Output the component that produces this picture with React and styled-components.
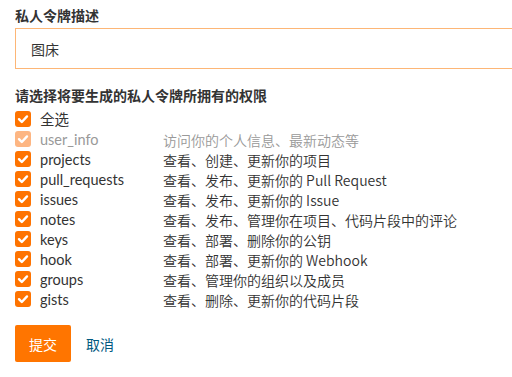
import React from 'react';
import styled, { createGlobalStyle } from 'styled-components';

const GlobalStyle = createGlobalStyle`
  html, body {
    margin: 0;
    padding: 0;
    background: #fff;
    overflow: hidden;
  }
  body {
    font-family: "Lato", "Noto Sans CJK SC", sans-serif;
    color: #333;
  }
`;

const Form = styled.form`
  padding: 5px 0 0 15px;
  font-size: 14px;
`;

const FieldLabel = styled.div`
  font-family: "Noto Sans CJK SC", sans-serif;
  font-weight: 700;
  font-size: 14px;
  line-height: 20px;
  color: #333;
`;

const TextInput = styled.input`
  display: block;
  box-sizing: border-box;
  width: calc(100% + 20px);
  height: 41px;
  margin: 3px 0 16px;
  padding: 0 15px;
  border: 1px solid #fdb676;
  border-radius: 0;
  outline: none;
  font-family: "Noto Sans CJK SC", sans-serif;
  font-size: 14px;
  color: #333;
`;

const ScopeList = styled.div`
  margin-top: 5px;
  display: flex;
  flex-direction: column;
`;

const ScopeRow = styled.label`
  display: grid;
  grid-template-columns: 25px 123px 1fr;
  align-items: center;
  height: 20px;
  line-height: 20px;
  color: ${(p) => (p.$disabled ? '#999' : '#333')};
`;

const Box = styled.span`
  width: 16px;
  height: 16px;
  border-radius: 3px;
  background: ${(p) => (p.$disabled ? '#fdb683' : '#fe7300')};
  display: flex;
  align-items: center;
  justify-content: center;
  margin-top: -3px;
`;

const Name = styled.span`
  font-family: "Lato", "Noto Sans CJK SC", sans-serif;
  font-size: 14.5px;
`;

const Desc = styled.span`
  font-family: "Noto Sans CJK SC", sans-serif;
  font-weight: 350;
  white-space: nowrap;
`;

const Actions = styled.div`
  display: flex;
  align-items: center;
  gap: 15px;
  margin-top: 15px;
`;

const SubmitButton = styled.button`
  width: 56px;
  height: 37px;
  border: none;
  border-radius: 2px;
  background: #ff7500;
  color: #fff;
  font-family: "Noto Sans CJK SC", sans-serif;
  font-size: 14px;
  cursor: pointer;
`;

const CancelLink = styled.a`
  color: #005980;
  font-family: "Noto Sans CJK SC", sans-serif;
  text-decoration: none;
`;

const Check = () => (
  <svg width="12" height="12" viewBox="0 0 12 12">
    <path d="M2 6.2 L4.8 9 L10 3.4" fill="none" stroke="#fff" strokeWidth="2.4" strokeLinecap="round" strokeLinejoin="round" />
  </svg>
);

const scopes = [
  { name: '全选', desc: '' },
  { name: 'user_info', desc: '访问你的个人信息、最新动态等', disabled: true },
  { name: 'projects', desc: '查看、创建、更新你的项目' },
  { name: 'pull_requests', desc: '查看、发布、更新你的 Pull Request' },
  { name: 'issues', desc: '查看、发布、更新你的 Issue' },
  { name: 'notes', desc: '查看、发布、管理你在项目、代码片段中的评论' },
  { name: 'keys', desc: '查看、部署、删除你的公钥' },
  { name: 'hook', desc: '查看、部署、更新你的 Webhook' },
  { name: 'groups', desc: '查看、管理你的组织以及成员' },
  { name: 'gists', desc: '查看、删除、更新你的代码片段' },
];

const App = () => (
  <>
    <GlobalStyle />
    <Form onSubmit={(e) => e.preventDefault()}>
      <FieldLabel>私人令牌描述</FieldLabel>
      <TextInput defaultValue="图床" />
      <FieldLabel>请选择将要生成的私人令牌所拥有的权限</FieldLabel>
      <ScopeList>
        {scopes.map((s) => (
          <ScopeRow key={s.name} $disabled={s.disabled}>
            <Box $disabled={s.disabled}><Check /></Box>
            <Name>{s.name}</Name>
            <Desc>{s.desc}</Desc>
          </ScopeRow>
        ))}
      </ScopeList>
      <Actions>
        <SubmitButton type="submit">提交</SubmitButton>
        <CancelLink href="#">取消</CancelLink>
      </Actions>
    </Form>
  </>
);

export default App;
